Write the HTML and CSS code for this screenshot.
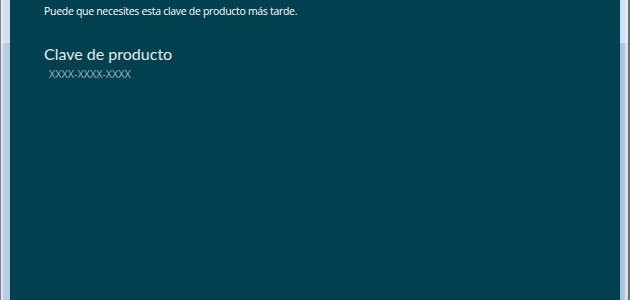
FILE: index.html
```html
<!DOCTYPE html>
<html lang="es">
<head>
<meta charset="utf-8">
<link rel="stylesheet" href="styles.css">
</head>
<body>
<div class="window">
  <div class="frame frame-left"><div class="edge-top"></div><div class="edge-rest"></div></div>
  <main class="content">
    <p class="note">Puede que necesites esta clave de producto más tarde.</p>
    <h2 class="label">Clave de producto</h2>
    <p class="key">XXXX-XXXX-XXXX</p>
  </main>
  <div class="frame frame-right"><div class="edge-top"></div><div class="edge-rest"></div></div>
</div>
</body>
</html>
```
FILE: styles.css
```css
html, body {
  margin: 0;
  padding: 0;
  width: 630px;
  height: 300px;
  overflow: hidden;
  background: #01404f;
}
.window {
  display: flex;
  height: 300px;
}
.frame {
  width: 9px;
  display: flex;
  flex-direction: column;
}
.frame-left {
  border-left: 1px solid #7f8388;
  box-shadow: inset 1px 0 0 #c9ccd0;
}
.frame-right {
  border-right: 2px solid #6c7074;
  width: 8px;
}
.edge-top {
  height: 43px;
  background: linear-gradient(to right, #e8eef6 0, #e8eef6 2px, #d4e3f4 2px, #cddff2 100%);
}
.edge-rest {
  flex: 1;
  background: linear-gradient(to right, #dfe6ef 0, #dfe6ef 2px, #b9cfe9 2px, #b3cae6 100%);
}
.frame-right .edge-top {
  background: linear-gradient(to right, #cddff2 0, #d4e3f4 5px, #e6ecf4 5px);
}
.frame-right .edge-rest {
  background: linear-gradient(to right, #a7bfdc 0, #b3cae6 5px, #d5dde7 5px);
}
.content {
  flex: 1;
  padding-left: 34px;
  font-family: "Lato", "Open Sans", sans-serif;
}
.note {
  margin: 3px 0 0;
  font-family: "Open Sans", sans-serif;
  font-size: 10.5px;
  letter-spacing: -0.3px;
  line-height: 16px;
  color: #ffffff;
}
.label {
  margin: 25px 0 0;
  font-size: 16px;
  font-weight: normal;
  line-height: 20px;
  color: #e6eaec;
}
.key {
  margin: 3px 0 0 5px;
  font-family: "Open Sans", sans-serif;
  font-size: 10.8px;
  line-height: 14px;
  color: #9fb3bb;
}
```
